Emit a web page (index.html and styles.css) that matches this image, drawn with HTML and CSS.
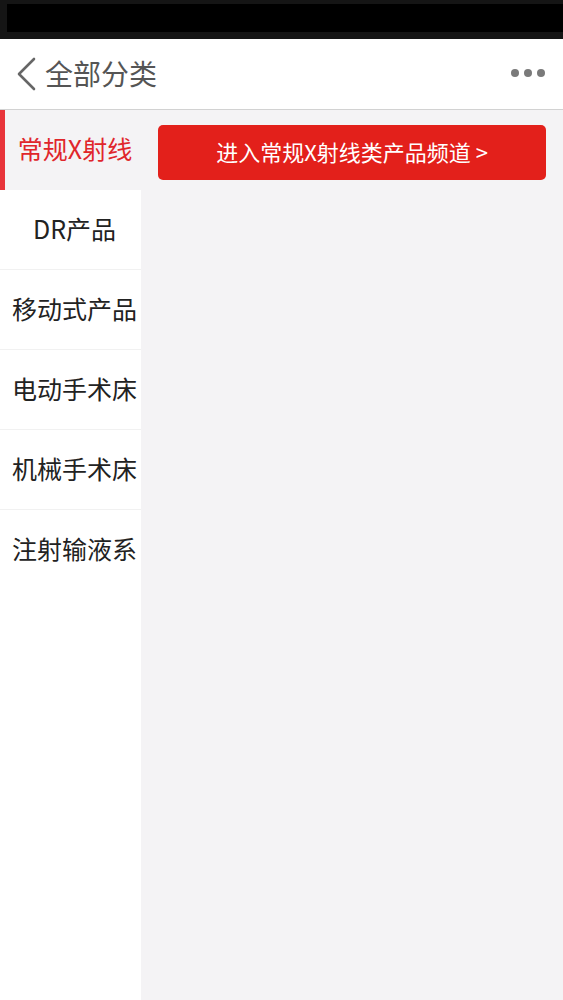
FILE: index.html
```html
<!DOCTYPE html>
<html lang="zh-CN">
<head>
    <meta charset="UTF-8">
    <meta name="viewport" content="width=device-width, initial-scale=1.0">
    <title>全部分类</title>
    <link rel="stylesheet" href="styles.css">
</head>
<body>
    <div class="status-bar"><div class="status-inner"></div></div>
    <header class="top-bar">
        <div class="back">
            <svg width="22" height="34" viewBox="0 0 22 34">
                <polyline points="18,2 3,17 18,32" fill="none" stroke="#666" stroke-width="2.6" stroke-linecap="round" stroke-linejoin="round"/>
            </svg>
            <span class="title">全部分类</span>
        </div>
        <div class="more">
            <span></span><span></span><span></span>
        </div>
    </header>
    <div class="page">
        <ul class="side-menu">
            <li class="active">常规X射线</li>
            <li>DR产品</li>
            <li>移动式产品</li>
            <li>电动手术床</li>
            <li>机械手术床</li>
            <li>注射输液系</li>
        </ul>
        <div class="content">
            <a class="channel-btn" href="#">进入常规X射线类产品频道 &gt;</a>
        </div>
    </div>
</body>
</html>
```

FILE: styles.css
```css
* {
    box-sizing: border-box;
}
body {
    margin: 0;
    height: 1000px;
    overflow: hidden;
    font-family: "Noto Sans CJK SC", "Noto Sans", sans-serif;
    background-color: #f4f3f5;
    display: flex;
    flex-direction: column;
}
.status-bar {
    height: 39px;
    background-color: #151515;
    padding: 4px 0 7px 7px;
}
.status-inner {
    height: 100%;
    background-color: #000;
}
.top-bar {
    height: 71px;
    background-color: #fff;
    border-bottom: 1px solid #d2d2d2;
    display: flex;
    align-items: center;
    justify-content: space-between;
    padding: 0 18px 0 16px;
}
.back {
    display: flex;
    align-items: center;
    gap: 7px;
}
.back svg {
    display: block;
}
.title {
    font-size: 28px;
    color: #555;
    line-height: 1;
    padding-bottom: 2px;
}
.more {
    display: flex;
    gap: 5px;
    padding-bottom: 2px;
}
.more span {
    width: 8px;
    height: 8px;
    border-radius: 50%;
    background-color: #7a7a7a;
}
.page {
    flex: 1;
    display: flex;
}
.side-menu {
    list-style: none;
    margin: 0;
    padding: 0;
    width: 141px;
    background-color: #fff;
}
.side-menu li {
    height: 80px;
    line-height: 76px;
    padding: 0 0 4px 8px;
    text-align: center;
    font-size: 25px;
    color: #222;
    white-space: nowrap;
    overflow: hidden;
    border-bottom: 1px solid #f1f1f1;
}
.side-menu li:last-child {
    border-bottom: none;
}
.side-menu li.active {
    background-color: #f4f3f5;
    color: #e0262b;
    border-left: 5px solid #e8343a;
    padding-left: 4px;
    border-bottom: none;
}
.content {
    flex: 1;
    padding: 15px 17px 0 17px;
}
.channel-btn {
    display: block;
    height: 55px;
    line-height: 53px;
    background-color: #e3201b;
    color: #fff;
    text-align: center;
    text-decoration: none;
    font-size: 22px;
    border-radius: 5px;
}
```
